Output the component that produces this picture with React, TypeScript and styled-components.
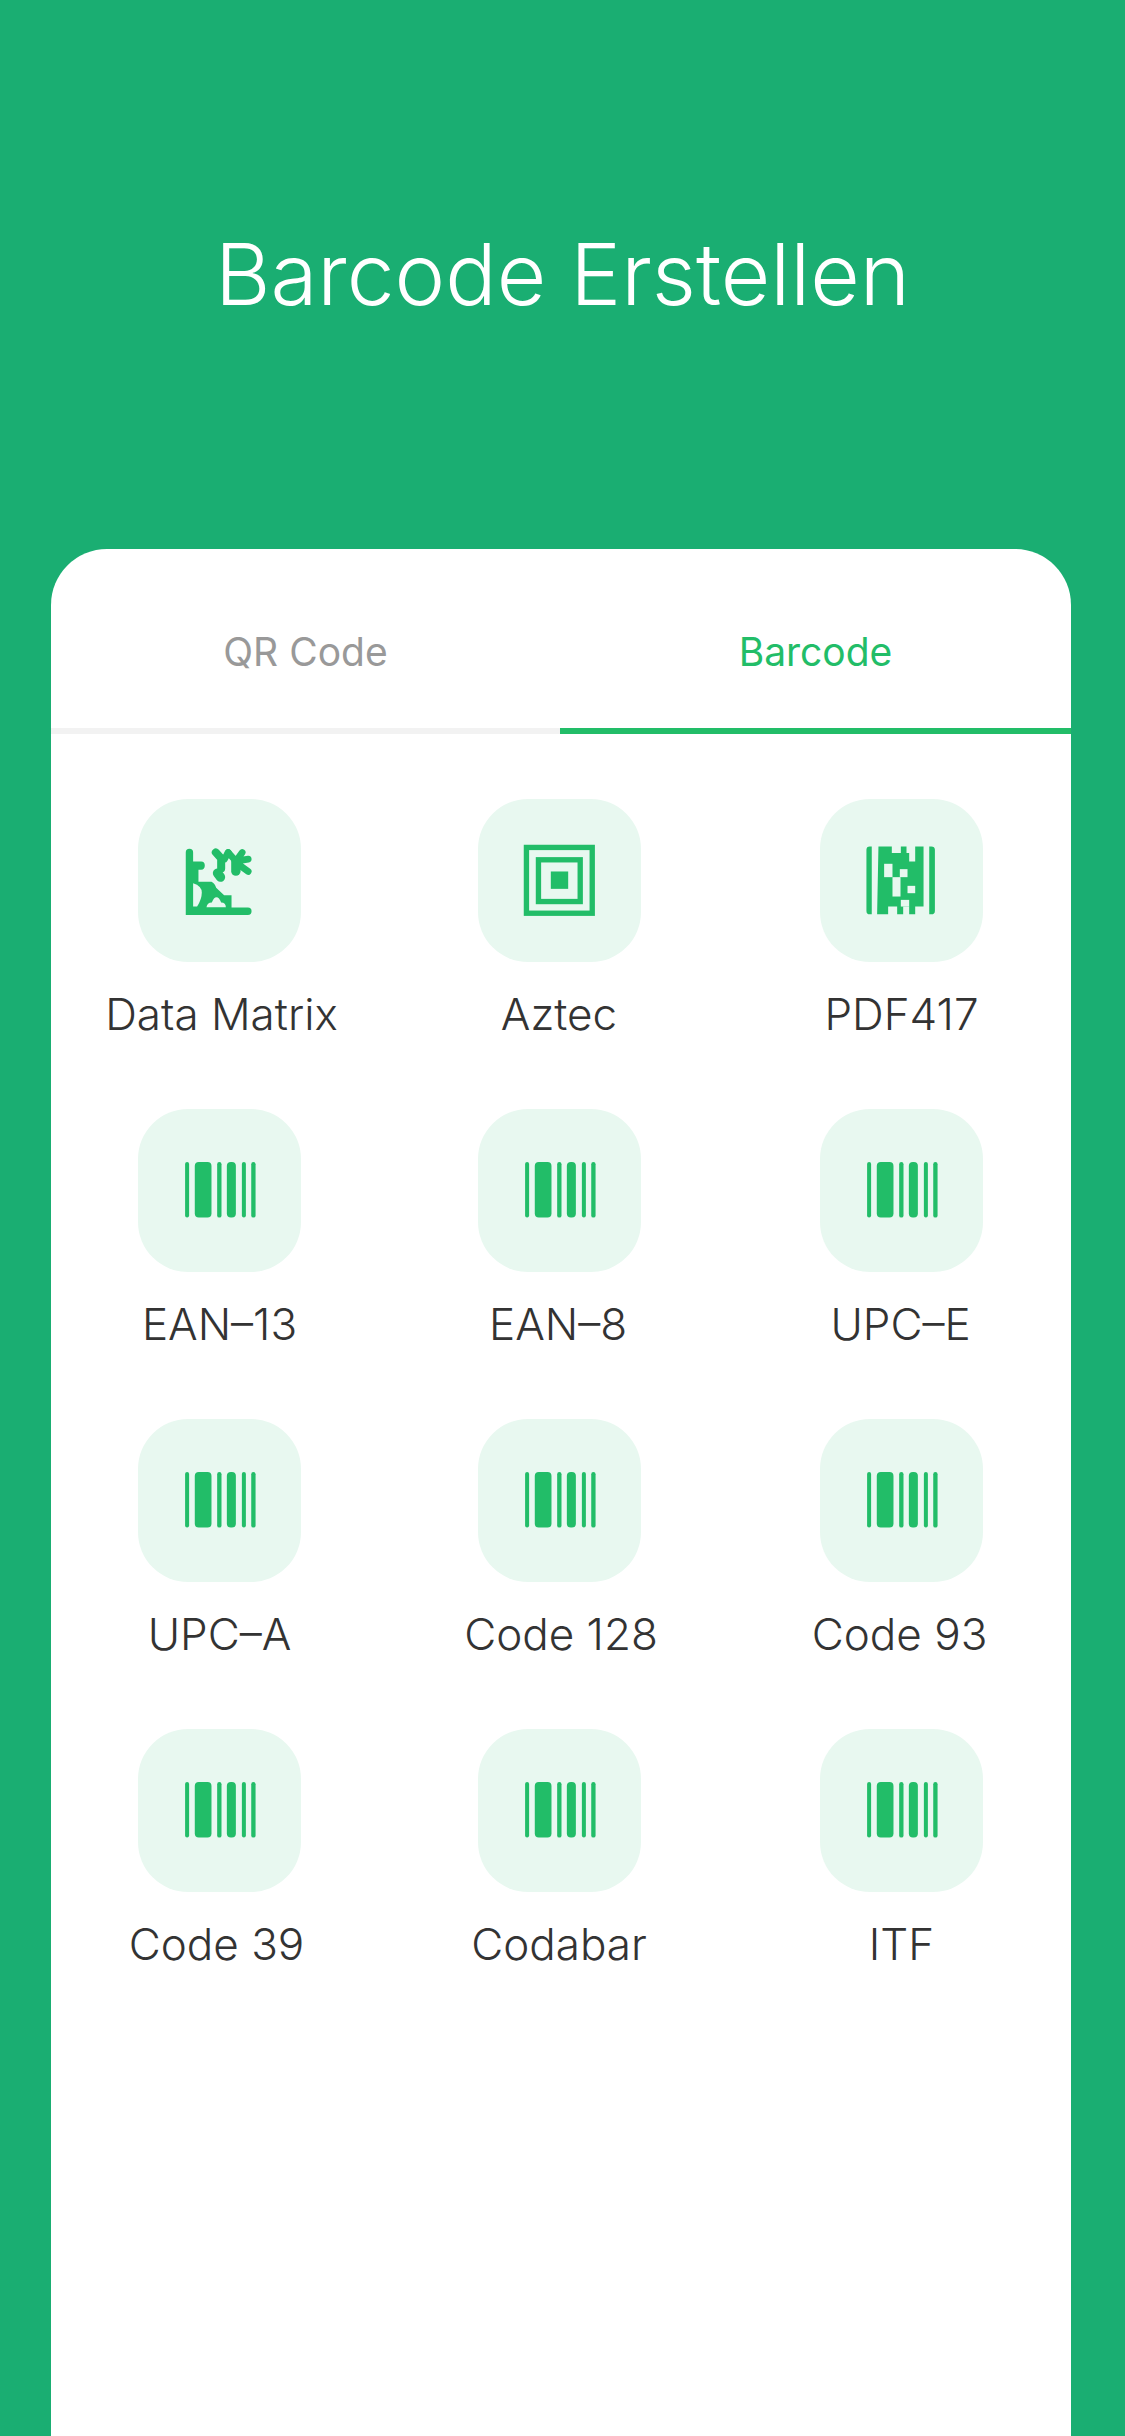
import styled, { createGlobalStyle } from "styled-components";

const GlobalStyle = createGlobalStyle`
  html, body {
    margin: 0;
    padding: 0;
    background: #1aae72;
  }
`;

const Page = styled.main`
  width: 1125px;
  height: 2436px;
  display: flex;
  flex-direction: column;
  overflow: hidden;
  background: #1aae72;
  font-family: Inter, "Noto Sans", sans-serif;
`;

const Header = styled.header`
  height: 549px;
  flex: none;
  box-sizing: border-box;
  padding-bottom: 1px;
  display: flex;
  align-items: center;
  justify-content: center;
`;

const Title = styled.h1`
  margin: 0;
  font-size: 85.5px;
  font-weight: 340;
  color: #fff;
`;

const Card = styled.section`
  flex: 1;
  margin: 0 54px 0 51px;
  background: #fff;
  border-radius: 56px 56px 0 0;
`;

const Tabs = styled.div`
  display: grid;
  grid-template-columns: 509px 511px;
  height: 185px;
`;

const Tab = styled.div<{ $active?: boolean }>`
  display: flex;
  align-items: center;
  justify-content: center;
  padding-top: 26px;
  font-size: 39px;
  font-weight: 420;
  color: ${(p) => (p.$active ? "#22bd68" : "#999999")};
  border-bottom: 6px solid ${(p) => (p.$active ? "#22bd68" : "#f2f2f2")};
`;

const Grid = styled.div`
  display: grid;
  grid-template-columns: 337px 342px 343px;
  grid-auto-rows: 310px;
  padding-top: 65px;
`;

const Item = styled.div`
  display: flex;
  flex-direction: column;
  align-items: center;
`;

const Tile = styled.div`
  width: 163px;
  height: 163px;
  border-radius: 50px;
  background: #e8f8f0;
  svg {
    display: block;
  }
`;

const Label = styled.div<{ $shift?: number }>`
  margin-top: 22px;
  margin-left: ${(p) => p.$shift ?? 0}px;
  font-size: 44px;
  font-weight: 350;
  line-height: 60px;
  white-space: nowrap;
  color: #333333;
`;

const GREEN = "#22bd68";
const TILE = "#e8f8f0";

/* paths are in the 3x crop space of a tile, hence the viewBox offsets */
function BarsIcon() {
  return (
    <svg width="163" height="163" viewBox="25 28 488 488" fill={GREEN}>
      <rect x="166" y="187" width="12" height="166" rx="6" />
      <rect x="195" y="187" width="50" height="166" rx="12" />
      <rect x="262" y="187" width="13" height="166" rx="6.5" />
      <rect x="291" y="187" width="27" height="166" rx="12" />
      <rect x="336" y="187" width="12" height="166" rx="6" />
      <rect x="364" y="187" width="13" height="166" rx="6.5" />
    </svg>
  );
}

function AztecIcon() {
  return (
    <svg width="163" height="163" viewBox="25 28 488 488" fill="none" stroke={GREEN}>
      <rect x="170" y="173" width="197" height="197" strokeWidth="16" />
      <rect x="206" y="210" width="125" height="125" strokeWidth="16" />
      <rect x="243" y="245" width="52" height="52" fill={GREEN} stroke="none" />
    </svg>
  );
}

function MatrixIcon() {
  return (
    <svg width="163" height="163" viewBox="25 28 488 488" fill={GREEN}>
      <path d="M168 188a11 11 0 0 1 22 0v27h24q11 0 11 12t-11 13h-8v36h39q10 4 14 18l24 22h22v37h49a11 11 0 0 1 0 22H168z" />
      <path d="M190 280q26 8 26 28t-14 42h-12z" fill={TILE} />
      <path d="M230 352q2-14 16-14q6-16 14-16t14 16q14 0 14 14z" fill={TILE} />
      <g fill="none" stroke={GREEN} strokeLinecap="round" strokeLinejoin="round">
        <path d="M258 188L274 206V236" strokeWidth="24" />
        <path d="M295 188L284 208" strokeWidth="20" />
        <path d="M295 188L318 214M337 188L318 214M355 208L318 214M355 245L318 218" strokeWidth="20" />
        <path d="M318 214V244" strokeWidth="28" />
        <path d="M263 250L272 262" strokeWidth="28" />
      </g>
    </svg>
  );
}

function PdfIcon() {
  return (
    <svg width="163" height="163" viewBox="33 28 488 488" fill={GREEN}>
      <path d="M188 170v203h-6q-10 0-10-10V180q0-10 10-10z" />
      <path d="M360 170h6q11 0 11 10v183q0 10-11 10h-6z" />
      <path d="M208 170h40v20h27v-20h17v20h8v25h18v-45h25v180h-25v23h-18v-23h-18v23h-18v-23h-27v23h-33z" />
      <g fill={TILE}>
        <rect x="225" y="222" width="25" height="40" />
        <rect x="272" y="238" width="23" height="24" />
        <rect x="250" y="262" width="24" height="58" />
        <rect x="295" y="288" width="23" height="22" />
        <rect x="275" y="330" width="25" height="20" />
      </g>
    </svg>
  );
}

const items = [
  { name: "Data Matrix", icon: <MatrixIcon />, shift: 4 },
  { name: "Aztec", icon: <AztecIcon />, shift: 0 },
  { name: "PDF417", icon: <PdfIcon />, shift: 0 },
  { name: "EAN\u201313", icon: <BarsIcon />, shift: 0 },
  { name: "EAN\u20138", icon: <BarsIcon />, shift: -2 },
  { name: "UPC\u2013E", icon: <BarsIcon />, shift: -2 },
  { name: "UPC\u2013A", icon: <BarsIcon />, shift: 0 },
  { name: "Code 128", icon: <BarsIcon />, shift: 4 },
  { name: "Code 93", icon: <BarsIcon />, shift: -4 },
  { name: "Code 39", icon: <BarsIcon />, shift: -6 },
  { name: "Codabar", icon: <BarsIcon />, shift: 0 },
  { name: "ITF", icon: <BarsIcon />, shift: 0 },
];

export default function App() {
  return (
    <Page>
      <GlobalStyle />
      <Header>
        <Title>Barcode Erstellen</Title>
      </Header>
      <Card>
        <Tabs>
          <Tab>QR Code</Tab>
          <Tab $active>Barcode</Tab>
        </Tabs>
        <Grid>
          {items.map((item) => (
            <Item key={item.name}>
              <Tile>{item.icon}</Tile>
              <Label $shift={item.shift}>{item.name}</Label>
            </Item>
          ))}
        </Grid>
      </Card>
    </Page>
  );
}
